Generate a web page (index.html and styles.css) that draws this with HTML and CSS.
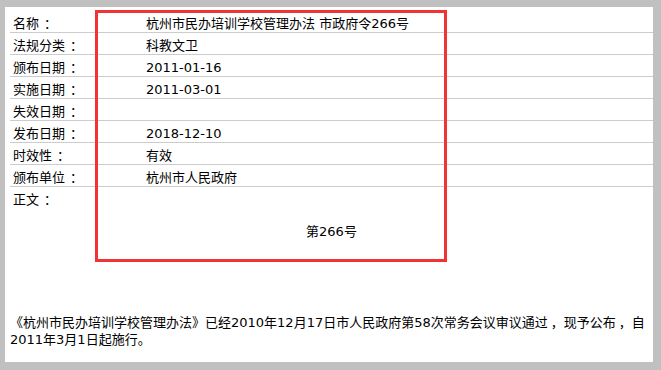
FILE: index.html
```html
<!DOCTYPE html>
<html lang="zh-CN">
<head>
<meta charset="utf-8">
<title>杭州市民办培训学校管理办法</title>
<link rel="stylesheet" href="styles.css">
</head>
<body>
<div class="page">
  <div class="info">
    <div class="row"><span class="label">名称<span class="punct">：</span></span><span class="value">杭州市民办培训学校管理办法 市政府令266号</span></div>
    <div class="row"><span class="label">法规分类<span class="punct">：</span></span><span class="value">科教文卫</span></div>
    <div class="row"><span class="label">颁布日期<span class="punct">：</span></span><span class="value">2011-01-16</span></div>
    <div class="row"><span class="label">实施日期<span class="punct">：</span></span><span class="value">2011-03-01</span></div>
    <div class="row"><span class="label">失效日期<span class="punct">：</span></span><span class="value"></span></div>
    <div class="row"><span class="label">发布日期<span class="punct">：</span></span><span class="value">2018-12-10</span></div>
    <div class="row"><span class="label">时效性<span class="punct">：</span></span><span class="value">有效</span></div>
    <div class="row"><span class="label">颁布单位<span class="punct">：</span></span><span class="value">杭州市人民政府</span></div>
    <div class="row row-plain"><span class="label">正文<span class="punct">：</span></span><span class="value"></span></div>
  </div>
  <div class="content">
    <p class="order">第266号</p>
    <p class="para">《杭州市民办培训学校管理办法》已经2010年12月17日市人民政府第58次常务会议审议通过<span class="comma">，</span>现予公布<span class="comma">，</span>自2011年3月1日起施行。</p>
  </div>
</div>
<div class="highlight"></div>
</body>
</html>
```
FILE: styles.css
```css
html, body {
  margin: 0;
  padding: 0;
}
body {
  background: #c0c0c0;
  padding: 7px 8px 8px 5px;
  height: 370px;
  box-sizing: border-box;
  font-family: "DejaVu Sans", "Noto Sans CJK SC", sans-serif;
  font-size: 13px;
  color: #000;
  overflow: hidden;
}
.punct {
  padding-left: 5px;
}
.comma {
  padding-left: 3px;
}
.page {
  background: #fff;
  height: 355px;
  box-sizing: border-box;
  padding: 4px 0 0 5px;
}
.info {
  display: flex;
  flex-direction: column;
}
.row {
  display: flex;
  height: 22px;
  padding-top: 4px;
  line-height: 17px;
  box-sizing: border-box;
  border-bottom: 1px solid #cccccc;
}
.row-plain {
  border-bottom: none;
}
.label {
  width: 136px;
  padding-left: 3px;
  box-sizing: border-box;
  flex: none;
  white-space: nowrap;
}
.value {
  flex: 1;
}
.content {
  margin: 0;
}
.order {
  margin: 12px 0 0 0;
  line-height: 21px;
  text-align: center;
}
.para {
  margin: 72px 0 0 0;
  line-height: 17px;
}
.highlight {
  position: absolute;
  left: 95px;
  top: 10px;
  width: 352px;
  height: 252px;
  box-sizing: border-box;
  border: 3px solid #f33333;
}
```
